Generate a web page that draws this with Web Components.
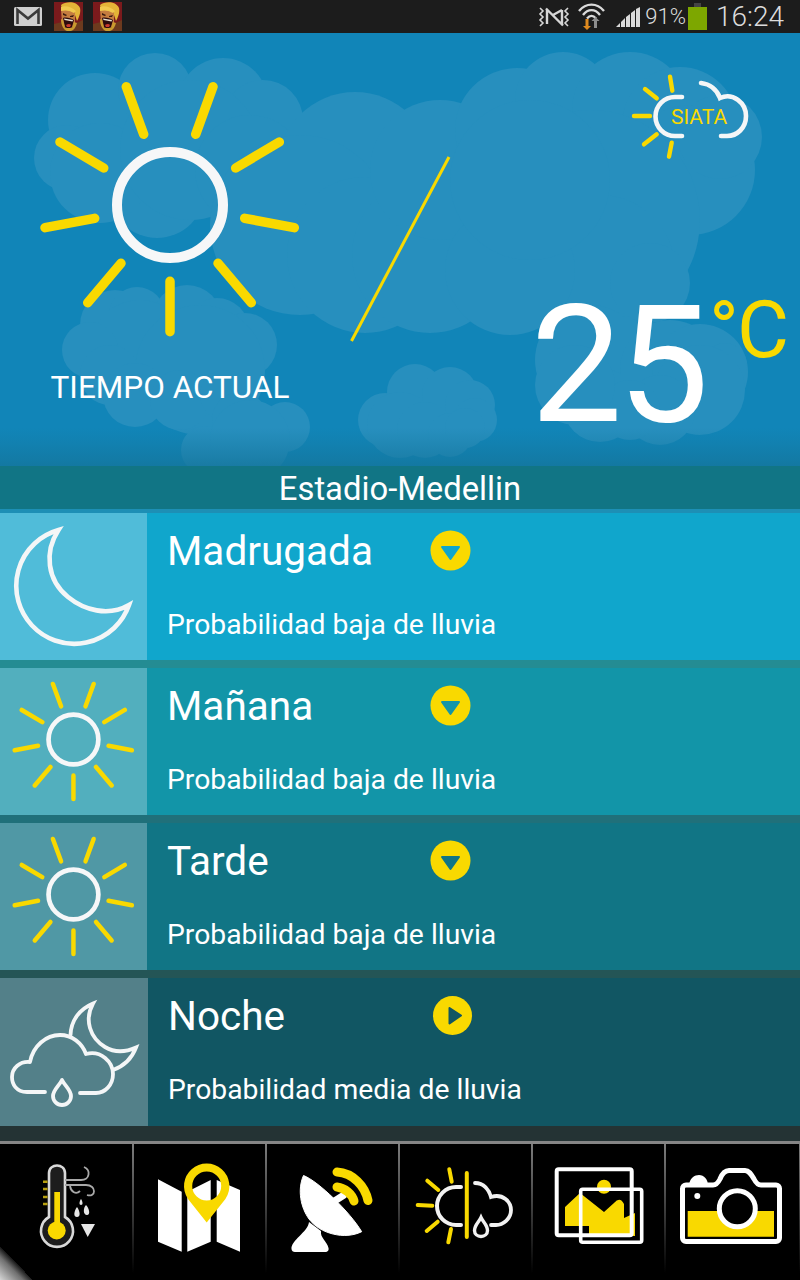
<!DOCTYPE html>
<html lang="es">
<head>
<meta charset="utf-8">
<title>SIATA</title>
<style>
  html, body { margin: 0; padding: 0; background: #000; }
  body { width: 800px; height: 1280px; overflow: hidden; font-family: Roboto, "Liberation Sans", sans-serif; color: #fff; }
</style>
</head>
<body>
<weather-app>
  <status-bar slot="status"></status-bar>
  <weather-hero slot="hero"></weather-hero>
  <location-bar slot="location">Estadio-Medellin</location-bar>
  <forecast-row slot="rows" icon="moon" box="0 513 147 147" gap="4" arrow="down" style="--gap:#1d8fb5;--bg:#10a6cc;--tile:#50bcd9">
    <span>Madrugada</span><span slot="detail">Probabilidad baja de lluvia</span>
  </forecast-row>
  <forecast-row slot="rows" icon="sun" scale="0.47" box="-135 -131 270 270" arrow="down" style="--gap:#248c93;--bg:#1295a8;--tile:#52afbe">
    <span>Mañana</span><span slot="detail">Probabilidad baja de lluvia</span>
  </forecast-row>
  <forecast-row slot="rows" icon="sun" scale="0.47" box="-135 -131 270 270" arrow="down" style="--gap:#20707a;--bg:#117585;--tile:#5098a5">
    <span>Tarde</span><span slot="detail">Probabilidad baja de lluvia</span>
  </forecast-row>
  <forecast-row slot="rows" wide icon="nightrain" box="0 0 148 148" arrow="right" style="--gap:#245556;--bg:#115663;--tile:#538089">
    <span>Noche</span><span slot="detail">Probabilidad media de lluvia</span>
  </forecast-row>
  <bottom-nav slot="nav"></bottom-nav>
</weather-app>

<script>
const yellow = '#f9d900';

// page coordinates are kept in the paths where possible, the box attribute crops them
const icons = {
  sun: `
    <g fill="none" stroke="${yellow}" stroke-width="9.5" stroke-linecap="round">
      <path d="M-43.7 -118.3L-26.3 -70.7M43 -118.3L25.7 -70.7M-110 -63L-66.3 -37M109.3 -63L65.7 -37M-125 22.7L-75.3 13.3M124.3 22.7L74.7 13.3M-82.3 97.7L-49 58.3M81.3 97.7L48 58.3M0 76.3V126.7"/>
    </g>
    <circle r="53" fill="none" stroke="#f6f7f8" stroke-width="10"/>`,
  moon: `<path d="M58.5 530C44 552 47 580 68 597C84 610 108 617 129 605A58 58 0 1 1 58.5 530Z" fill="none" stroke="#f4f6f7" stroke-width="4.6" stroke-miterlimit="8"/>`,
  nightrain: `
    <g fill="none" stroke="#f4f6f7" stroke-width="3.8" stroke-linecap="round" stroke-linejoin="round">
      <path d="M45 114H27C16 114 12 106 12 99C12 90 20 83 30 84C33 68 46 57 60 57C72 57 82 65 86 76C101 72 113 84 113 96C113 107 105 115 96 115H80"/>
      <path d="M70.5 57C71 42 80 31 93 25.5C84 42 90 60 105 69C115 75 126 74 136 69.5C132 80 124 88 113 92" stroke-linejoin="miter"/>
      <path d="M62 102C59 108 53 112 53 118C53 123 57 127 62 127C67 127 71 123 71 118C71 112 65 108 62 102Z"/>
    </g>`,
  thermo: `
    <path d="M49 1173C49 1163 65 1163 65 1173V1217A16 16 0 1 1 49 1217Z" fill="#1d1d1d" stroke="#d9d9d9" stroke-width="2.6"/>
    <rect x="54.300" y="1192" width="5.700" height="32" fill="${yellow}"/>
    <circle cx="56.700" cy="1230.500" r="9" fill="${yellow}"/>
    <path d="M43 1181.700H47.500M43 1189H47.500M43 1197H47.500M43 1204H47.500" stroke="#b79f10" stroke-width="2.500"/>
    <path d="M65 1180H81C90 1180 91 1170 84 1167M65 1185H86C97 1185 96 1198 87 1195M70 1186C71 1192 76 1195 80 1191" fill="none" stroke="#a9a9a9" stroke-width="1.800"/>
    <path d="M77 1207C74 1211 73 1217 77 1217C81 1217 80 1211 77 1207ZM81 1199C79 1202 79 1205 81 1205C83 1205 83 1202 81 1199ZM86 1205C83 1208 83 1215 87 1215C91 1215 89 1208 86 1205Z" fill="#e6e6e6"/>
    <path d="M81 1224H95L87.700 1237Z" fill="#e6e6e6"/>`,
  map: `
    <path d="M158 1179.300L181.700 1191.700V1251.700L158 1241.700ZM187.300 1191.700L210.700 1180V1241.700L187.300 1251.700ZM216.700 1180L240 1190V1251.700L216.700 1241.700Z" fill="#fff"/>
    <path fill-rule="evenodd" d="M206.700 1222.500L188 1199A22.700 22.700 0 1 1 225.400 1199ZM206.700 1171.500A14.500 14.500 0 1 0 206.700 1200.500A14.500 14.500 0 1 0 206.700 1171.500Z" fill="${yellow}"/>`,
  dish: `
    <path d="M303.500 1175.500C318 1181 350 1212 361.700 1231.700C345 1240 320 1234 309 1219C301 1208 297 1190 303.500 1175.500Z" fill="#fff" stroke="#fff" stroke-width="1" stroke-linejoin="round"/>
    <path d="M333 1202L344 1195" stroke="#fff" stroke-width="7" stroke-linecap="round"/>
    <path d="M309 1222C308 1232 291 1240 291.500 1249C291.700 1251 293 1252 295 1252H325C328 1252 329 1250 328.500 1248C327 1241 320 1238 321 1231Z" fill="#fff"/>
    <path d="M337 1172C353 1173 365 1186 368 1200.500M337 1187C345 1188 352 1194 354 1201" fill="none" stroke="${yellow}" stroke-width="9" stroke-linecap="round"/>`,
  split: `
    <path d="M449.300 1169.300L451.700 1181.700M427.300 1180.700L438.300 1190M417.700 1205L432.300 1205.700M426.700 1231L437.700 1221.700M451 1229L448.300 1242.300" stroke="${yellow}" stroke-width="4" stroke-linecap="round"/>
    <path d="M461 1187H456A18.500 18.500 0 0 0 456 1225H461" fill="none" stroke="#f2f2f2" stroke-width="4" stroke-linecap="round"/>
    <path d="M466.800 1173V1237" stroke="${yellow}" stroke-width="4" stroke-linecap="round"/>
    <path d="M475 1183C484 1183 489 1190 491 1197C503 1193 511 1202 511 1210C511 1219 503 1225 496 1225H491" fill="none" stroke="#f2f2f2" stroke-width="3.800" stroke-linecap="round"/>
    <path d="M481 1217.500C479 1222 474.500 1225 474.500 1230.500C474.500 1234 477.500 1236.500 481 1236.500C484.500 1236.500 487.500 1234 487.500 1230.500C487.500 1225 483 1222 481 1217.500Z" fill="none" stroke="#f2f2f2" stroke-width="3.400"/>`,
  gallery: `
    <circle cx="604" cy="1186.700" r="7" fill="${yellow}"/>
    <path d="M565 1207L580 1193L604 1212L614 1203Q620 1196 624 1204V1218L635 1213V1236H589V1226H565Z" fill="${yellow}"/>
    <rect x="556.700" y="1169.300" width="75" height="66" rx="2" fill="none" stroke="#fff" stroke-width="4"/>
    <rect x="580.700" y="1189.300" width="61" height="53" rx="2" fill="none" stroke="#fff" stroke-width="3.600"/>`,
  camera: `
    <path d="M687.700 1211H774V1236.700H687.700Z" fill="${yellow}"/>
    <path d="M686 1185H713C716 1185 718 1183 720 1179C722 1174 725 1170.500 729 1170.500H745C749 1170.500 751 1174 754 1179C756 1183 758 1185 761 1185H776C778 1185 779.500 1186.500 779.500 1188.500V1238C779.500 1240 778 1241.500 776 1241.500H686C684 1241.500 682.500 1240 682.500 1238V1188.500C682.500 1186.500 684 1185 686 1185Z" fill="none" stroke="#fff" stroke-width="5" stroke-linejoin="round"/>
    <path d="M689 1186C689 1178 695 1175 699 1175C704 1175 708 1179 708 1186Z" fill="#fff"/>
    <circle cx="737.300" cy="1208.700" r="18" fill="#000" stroke="#fff" stroke-width="5"/>
    <circle cx="697.300" cy="1196" r="3" fill="#fff"/>`,
  logo: `
    <path d="M670 76.700L672.300 90.700M645 89L656.700 98.300M634 116H650M644 144.300L656.700 134.300M671.700 142.700L669 156.700" stroke="${yellow}" stroke-width="4.400" stroke-linecap="round"/>
    <path d="M682 97H675A19.500 19.500 0 0 0 675 136H682" fill="none" stroke="#f4f6f7" stroke-width="4.600" stroke-linecap="round"/>
    <path d="M701 83C710 84 717 90 720 98C733 92 746 103 746 116C746 128 737 136 727 136H721" fill="none" stroke="#f4f6f7" stroke-width="4.600" stroke-linecap="round"/>
    <text x="671" y="124.300" fill="${yellow}" font-family="Roboto, sans-serif" font-size="21" font-weight="400">SIATA</text>`
};

class WxIcon extends HTMLElement {
  connectedCallback() {
    const box = (this.getAttribute('box') || '0 0 100 100').split(' ');
    const scale = Number(this.getAttribute('scale') || 1);
    const w = box[2] * scale;
    const h = box[3] * scale;
    this.attachShadow({ mode: 'open' }).innerHTML = `
      <style>
        :host { display: block; flex: none; width: ${w}px; height: ${h}px; }
        svg { display: block; overflow: visible; }
      </style>
      <svg width="${w}" height="${h}" viewBox="${box.join(' ')}" aria-hidden="true">${icons[this.getAttribute('name')]}</svg>`;
  }
}
customElements.define('wx-icon', WxIcon);

const appTemplate = document.createElement('template');
appTemplate.innerHTML = `
<style>
  :host { display: flex; flex-direction: column; width: 800px; height: 1280px; background: #243334; }
  .rows { display: flex; flex-direction: column; padding-bottom: 15px; }
</style>
<slot name="status"></slot>
<slot name="hero"></slot>
<slot name="location"></slot>
<div class="rows"><slot name="rows"></slot></div>
<slot name="nav"></slot>
`;
class WeatherApp extends HTMLElement {
  constructor() {
    super();
    this.attachShadow({ mode: 'open' }).appendChild(appTemplate.content.cloneNode(true));
  }
}
customElements.define('weather-app', WeatherApp);

const barb = `
  <svg width="29" height="29" viewBox="0 0 29 29">
    <rect width="29" height="29" fill="#7b1a1c"/>
    <path d="M0 22L8 20L20 22L29 18V29H0Z" fill="#6d3a1e"/>
    <path d="M7 3C12 -1 23 -1 26 6C27 11 25 15 23 19L20 10L8 8Z" fill="#e3b437"/>
    <path d="M7 7L21 10L21 22C18 28 10 28 8 22Z" fill="#c47c3f"/>
    <path d="M7 5C11 3 18 5 22 9L20 11C15 8 11 8 7 9Z" fill="#f0c94e"/>
    <path d="M9 11L13 13L12 14L9 13ZM16 14L20 13L19 15L16 15Z" fill="#3a1a10"/>
    <path d="M9 16C12 15 17 16 20 18L18 25C15 27 12 26 11 25Z" fill="#2d0b0d"/>
    <path d="M10 16.500L19 18L18.500 19.500L10.500 18Z" fill="#e8e0d0"/>
    <path d="M12 23C14 21.500 16 21.500 17 23L16 25H13Z" fill="#c8382e"/>
    <path d="M7 17C7 24 10 28 13 29H17C20 28 22 25 23 21L20 20L18 26H11L9 18Z" fill="#c99a2e"/>
  </svg>`;

const statusTemplate = document.createElement('template');
statusTemplate.innerHTML = `
<style>
  :host { display: flex; flex: none; align-items: center; height: 33px; padding: 0 16px 0 14px; background: #1c1c1c; box-sizing: border-box; }
  svg { display: block; flex: none; }
  .mail { margin-right: 12px; }
  .game { margin-right: 10px; }
  .right { display: flex; align-items: center; margin-left: auto; }
  .pct { font: 300 22px/33px Roboto, sans-serif; color: #dcdcdc; margin: 0 2px 0 5px; }
  .time { font: 300 28px/33px Roboto, sans-serif; color: #dcdcdc; margin-left: 9px; }
</style>
<svg class="mail" width="28" height="19" viewBox="0 0 28 19">
  <rect width="28" height="19" rx="1.500" fill="#cfcfcf"/>
  <path d="M3.500 17V3L14 11.500L24.500 3V17" fill="none" stroke="#3a3a3a" stroke-width="2.600"/>
</svg>
<span class="game">${barb}</span>
<span>${barb}</span>
<div class="right">
  <svg width="32" height="20" viewBox="0 0 32 20" style="margin-right:8px">
    <path d="M2 1L5 4L2 7L5 10L2 13L5 16L2 19M30 1L27 4L30 7L27 10L30 13L27 16L30 19" fill="none" stroke="#d6d6d6" stroke-width="1.600"/>
    <path d="M9 3V17M8 1.500L25 18.500M24 3V17M24 3L15 8" fill="none" stroke="#d6d6d6" stroke-width="2.400"/>
  </svg>
  <svg width="27" height="27" viewBox="0 0 27 27" style="margin-right:11px">
    <g fill="none" stroke="#dadada" stroke-width="2.400">
      <path d="M1 8C8 -0.500 19 -0.500 26 8"/>
      <path d="M5 12C10 5.500 17 5.500 22 12"/>
      <path d="M9 15.500C12 12 15 12 18 15.500"/>
    </g>
    <path d="M7.500 16H10.500V23H13L9 27L5 23H7.500Z" fill="#e08a1e"/>
    <path d="M16 25V18H13.500L17.500 14L21.500 18H19V25Z" fill="#8e8e8e"/>
  </svg>
  <svg width="24" height="20" viewBox="0 0 24 20">
    <path d="M0 20L4 16V20ZM5 15L9 11V20H5ZM10 10L14 7V20H10ZM15 6L19 3V20H15ZM20 2L24 0V20H20Z" fill="#dadada"/>
  </svg>
  <span class="pct">91%</span>
  <svg width="19" height="27" viewBox="0 0 19 27">
    <rect x="6" width="7" height="5" fill="#444"/>
    <rect y="4" width="19" height="23" fill="#7da700"/>
  </svg>
  <span class="time">16:24</span>
</div>
`;
class StatusBar extends HTMLElement {
  constructor() {
    super();
    this.attachShadow({ mode: 'open' }).appendChild(statusTemplate.content.cloneNode(true));
  }
}
customElements.define('status-bar', StatusBar);

const clouds = [
  [95,120,47],[155,90,37],[223,103,45],[263,120,40],[67,158,33],[157,190,48],[100,173,50],[190,150,70],[250,170,55],
  [355,170,78],[300,225,90],[365,255,78],[430,255,78],[440,170,70],[517,130,62],[563,100,48],[630,110,58],[680,125,58],
  [690,170,65],[720,137,42],[590,220,110],[600,270,75],[650,283,40],[510,270,65],[530,180,80],
  [115,325,35],[137,315,28],[187,320,35],[217,330,32],[245,345,32],[140,350,50],[90,350,28],[200,370,65],[110,375,30],[135,395,32],[180,400,30],[225,395,25],
  [240,420,28],[285,427,25],[205,450,24],[250,440,40],
  [415,392,28],[450,395,28],[470,405,25],[475,420,22],[385,420,27],[400,425,33],[425,430,28],[450,435,22],[465,428,20],
  [590,360,55],[670,370,50],[700,372,48],[725,365,22],[700,390,45],[660,410,35],[600,405,37],[630,410,30],[575,385,40]
].map(c => `<circle cx="${c[0]}" cy="${c[1] - 33}" r="${c[2]}"/>`).join('');

const heroTemplate = document.createElement('template');
heroTemplate.innerHTML = `
<style>
  :host { display: flex; flex: none; position: relative; height: 433px; overflow: hidden; background: #1185b8; }
  .clouds { position: absolute; left: 0; top: 0; }
  .now { position: relative; display: flex; flex-direction: column; align-items: center; width: 270px; margin: 42px 0 0 35px; }
  .now span { font: 400 31.500px/40px Roboto, sans-serif; color: #fff; margin-top: 23px; white-space: nowrap; }
  .slash { position: relative; margin: 121px 0 0 42px; }
  .side { position: relative; flex: 1; display: flex; flex-direction: column; align-items: flex-end; }
  .logo { margin: 39px 48px 0 0; }
  .temp { display: flex; margin: 119px 13px 0 0; }
  .deg { font: 400 163px/170px Roboto, sans-serif; color: #fff; letter-spacing: -5px; }
  .unit { font: 400 80px/90px Roboto, sans-serif; color: ${yellow}; margin-left: 5px; margin-top: 4px; letter-spacing: -2px; }
</style>
<svg class="clouds" width="800" height="433" viewBox="0 0 800 433">
  <defs>
    <linearGradient id="fade" x1="0" x2="0" y1="0" y2="1">
      <stop offset="0" stop-color="#14789f" stop-opacity="0"/>
      <stop offset="1" stop-color="#14749a" stop-opacity="0.75"/>
    </linearGradient>
  </defs>
  <g fill="#278fbe">${clouds}</g>
  <rect y="395" width="800" height="38" fill="url(#fade)"/>
</svg>
<div class="now">
  <wx-icon name="sun" box="-135 -130 270 270"></wx-icon>
  <span>TIEMPO ACTUAL</span>
</div>
<svg class="slash" width="106" height="190" viewBox="347 154 106 190">
  <path d="M351.500 341L449 157" stroke="${yellow}" stroke-width="3"/>
</svg>
<div class="side">
  <wx-icon class="logo" name="logo" box="630 72 122 90"></wx-icon>
  <div class="temp">
    <span class="deg">25</span>
    <span class="unit">°C</span>
  </div>
</div>
`;
class WeatherHero extends HTMLElement {
  constructor() {
    super();
    this.attachShadow({ mode: 'open' }).appendChild(heroTemplate.content.cloneNode(true));
  }
}
customElements.define('weather-hero', WeatherHero);

const locationTemplate = document.createElement('template');
locationTemplate.innerHTML = `
<style>
  :host { display: block; flex: none; height: 43px; background: #117585; text-align: center; font: 400 32.800px/47px Roboto, sans-serif; color: #fff; }
</style>
<slot></slot>
`;
class LocationBar extends HTMLElement {
  constructor() {
    super();
    this.attachShadow({ mode: 'open' }).appendChild(locationTemplate.content.cloneNode(true));
  }
}
customElements.define('location-bar', LocationBar);

const rowTemplate = document.createElement('template');
rowTemplate.innerHTML = `
<style>
  :host { display: flex; flex: none; border-top: 8px solid var(--gap); background: var(--bg); height: 147px; }
  :host([gap="4"]) { border-top-width: 4px; }
  :host([wide]) { height: 148px; }
  .tile { flex: none; display: flex; align-items: center; justify-content: center; width: 147px; background: var(--tile); }
  :host([wide]) .tile { width: 148px; }
  .body { display: flex; flex-direction: column; padding: 14px 0 0 20px; }
  .head { display: flex; align-items: center; height: 46px; }
  .title { width: 263px; padding-top: 2px; font: 400 40.500px/46px Roboto, sans-serif; color: #fff; white-space: nowrap; }
  :host([wide]) .title { width: 263.500px; }
  .detail { margin-top: 32px; font: 400 28.300px/40px Roboto, sans-serif; color: #fff; white-space: nowrap; }
  .arrow { display: block; flex: none; }
</style>
<div class="tile"></div>
<div class="body">
  <div class="head">
    <div class="title"><slot></slot></div>
    <svg class="arrow" width="41" height="41" viewBox="-20.500 -20.500 41 41"></svg>
  </div>
  <div class="detail"><slot name="detail"></slot></div>
</div>
`;
class ForecastRow extends HTMLElement {
  constructor() {
    super();
    this.attachShadow({ mode: 'open' }).appendChild(rowTemplate.content.cloneNode(true));
  }
  connectedCallback() {
    const icon = document.createElement('wx-icon');
    icon.setAttribute('name', this.getAttribute('icon'));
    icon.setAttribute('box', this.getAttribute('box'));
    if (this.hasAttribute('scale')) icon.setAttribute('scale', this.getAttribute('scale'));
    this.shadowRoot.querySelector('.tile').appendChild(icon);
    const tri = this.getAttribute('arrow') === 'right'
      ? 'M-3 -7.500L8.500 0L-3 8Z'
      : 'M-8.500 -3.500H8.500L0 8.500Z';
    this.shadowRoot.querySelector('.arrow').innerHTML =
      `<circle r="${this.hasAttribute('wide') ? 19.5 : 20}" fill="${yellow}"/>
       <path d="${tri}" fill="var(--bg)" stroke="var(--bg)" stroke-width="2" stroke-linejoin="round"/>`;
  }
}
customElements.define('forecast-row', ForecastRow);

const navTemplate = document.createElement('template');
navTemplate.innerHTML = `
<style>
  :host { display: grid; grid-template-columns: repeat(5, 133px) 135px; flex: none; position: relative; height: 139px; box-sizing: border-box; border-top: 3px solid #858585; background: #000; overflow: hidden; }
  .cell { background: linear-gradient(#7c7c7c, #000 95%) left / 1px 100% no-repeat, linear-gradient(#7c7c7c, #000 95%) right / 1px 100% no-repeat; }
  .cell:first-of-type { background: linear-gradient(#7c7c7c, #000 95%) right / 1px 100% no-repeat; }
  .cell:last-of-type { background: linear-gradient(#7c7c7c, #000 95%) left / 1px 100% no-repeat; }
  .corner { position: absolute; left: 0; bottom: 0; width: 33px; height: 33px; background: linear-gradient(45deg, #d6d6d6 0, #707070 35%, #1a1a1a 50%, transparent 50%); }
</style>
<div class="cell"><wx-icon name="thermo" box="0 1144 133 136"></wx-icon></div>
<div class="cell"><wx-icon name="map" box="133 1144 133 136"></wx-icon></div>
<div class="cell"><wx-icon name="dish" box="266 1144 133 136"></wx-icon></div>
<div class="cell"><wx-icon name="split" box="399 1144 133 136"></wx-icon></div>
<div class="cell"><wx-icon name="gallery" box="532 1144 133 136"></wx-icon></div>
<div class="cell"><wx-icon name="camera" box="665 1144 135 136"></wx-icon></div>
<div class="corner"></div>
`;
class BottomNav extends HTMLElement {
  constructor() {
    super();
    this.attachShadow({ mode: 'open' }).appendChild(navTemplate.content.cloneNode(true));
  }
}
customElements.define('bottom-nav', BottomNav);
</script>
</body>
</html>
